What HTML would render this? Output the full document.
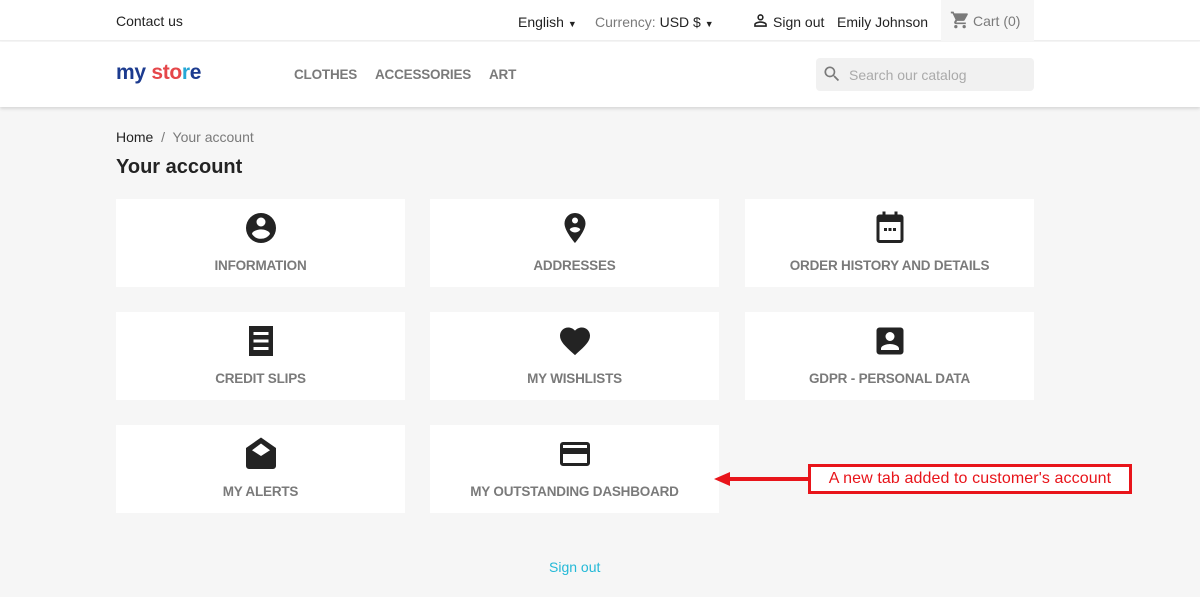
<!DOCTYPE html>
<html><head><style>
*{margin:0;padding:0;box-sizing:border-box}
body{width:1200px;height:597px;background:#f6f6f6;font-family:"Liberation Sans",sans-serif;color:#232323;position:relative;overflow:hidden}
.a{position:absolute}
.top{left:0;top:0;width:1200px;height:41px;background:#fff;border-bottom:1px solid #eee}
.hdr{left:0;top:42px;width:1200px;height:65px;background:#fff;box-shadow:0 2px 3px rgba(0,0,0,.12)}
.t{font-size:14px;white-space:nowrap}
.card{position:absolute;width:289px;height:88px;background:#fff;text-align:center}
.card svg{position:absolute;left:127px;top:11px}
.card span{position:absolute;left:0;right:0;top:59px;font-size:13.5px;font-weight:bold;color:#7a7a7a;letter-spacing:-0.2px}
.nav{font-size:13.5px;color:#7a7a7a;font-weight:bold;top:67px;letter-spacing:-0.2px}
</style></head><body>
<div class="a top"></div>
<div class="a t" style="left:116px;top:13px">Contact us</div>
<div class="a t" style="left:518px;top:14px">English <span style="font-size:9px">▼</span></div>
<div class="a t" style="left:595px;top:14px;color:#7a7a7a">Currency: <span style="color:#232323">USD $</span> <span style="font-size:9px;color:#232323">▼</span></div>
<svg class="a" style="left:751px;top:11px" width="19" height="19" viewBox="0 0 24 24"><path fill="#232323" d="M12 4a4 4 0 110 8 4 4 0 010-8zm0 2a2 2 0 100 4 2 2 0 000-4zm0 7c2.7 0 8 1.3 8 4v3H4v-3c0-2.7 5.3-4 8-4zm0 2c-3 0-6 1.5-6 2v1h12v-1c0-.5-3-2-6-2z"/></svg>
<div class="a t" style="left:773px;top:14px">Sign out</div>
<div class="a t" style="left:837px;top:14px">Emily Johnson</div>
<div class="a" style="left:941px;top:0;width:93px;height:41px;background:#f6f6f6"></div>
<svg class="a" style="left:950px;top:10px" width="20" height="20" viewBox="0 0 24 24"><path fill="#7a7a7a" d="M7 18a2 2 0 100 4 2 2 0 000-4zM1 2v2h2l3.6 7.6-1.4 2.4c-.7 1.3.3 3 1.8 3h12v-2H7.4l1.1-2h7.5c.8 0 1.4-.4 1.7-1l3.6-6.5A1 1 0 0020.5 4H5.2l-.9-2H1zm16 16a2 2 0 100 4 2 2 0 000-4z"/></svg>
<div class="a t" style="left:973px;top:13px;color:#7a7a7a">Cart (0)</div>
<div class="a hdr"></div>
<div class="a" style="left:116px;top:61px;font-size:21px;font-weight:bold;letter-spacing:-0.3px"><span style="color:#1c3b8f">my</span> <span style="color:#e5474a">sto</span><span style="color:#25a7d6">r</span><span style="color:#1c3b8f">e</span></div>
<div class="a nav" style="left:294px">CLOTHES</div>
<div class="a nav" style="left:375px">ACCESSORIES</div>
<div class="a nav" style="left:489px">ART</div>
<div class="a" style="left:816px;top:58px;width:218px;height:33px;background:#f1f1f1;border-radius:4px"></div>
<svg class="a" style="left:822px;top:64px" width="20" height="20" viewBox="0 0 24 24"><path fill="#7a7a7a" d="M15.5 14h-.8l-.3-.3A6.5 6.5 0 109.5 16a6.5 6.5 0 004.2-1.6l.3.3v.8l5 5 1.5-1.5-5-5zm-6 0a4.5 4.5 0 110-9 4.5 4.5 0 010 9z"/></svg>
<div class="a t" style="left:849px;top:67px;color:#aaa">Search our catalog</div>
<div class="a t" style="left:116px;top:129px">Home <span style="color:#7a7a7a">&nbsp;/&nbsp; Your account</span></div>
<div class="a" style="left:116px;top:156px;font-size:20px;font-weight:bold">Your account</div>

<div class="card" style="left:116px;top:199px"><svg width="36" height="36" viewBox="0 0 24 24"><path fill="#232323" d="M12 2a10 10 0 100 20 10 10 0 000-20zm0 3a3 3 0 110 6 3 3 0 010-6zm0 14.2a7.2 7.2 0 01-6-3.2c0-2 4-3.1 6-3.1s6 1.1 6 3.1a7.2 7.2 0 01-6 3.2z"/></svg><span>INFORMATION</span></div>
<div class="card" style="left:430px;top:199px"><svg width="36" height="36" viewBox="0 0 24 24"><path fill="#232323" d="M12 2a7 7 0 00-7 7c0 5 7 13 7 13s7-8 7-13a7 7 0 00-7-7zm0 3a2 2 0 110 4 2 2 0 010-4zm0 10a4.5 4.5 0 01-3.5-1.8c0-1.2 2.3-1.8 3.5-1.8s3.5.6 3.5 1.8A4.5 4.5 0 0112 15z"/></svg><span>ADDRESSES</span></div>
<div class="card" style="left:745px;top:199px"><svg width="36" height="36" viewBox="0 0 24 24"><path fill="#232323" d="M7 1h2v2h6V1h2v2h2a2 2 0 012 2v15a2 2 0 01-2 2H5a2 2 0 01-2-2V5a2 2 0 012-2h2V1zM5 8v12h14V8H5zm3 4h2v2H8zm3 0h2v2h-2zm3 0h2v2h-2z"/></svg><span>ORDER HISTORY AND DETAILS</span></div>

<div class="card" style="left:116px;top:312px"><svg width="36" height="36" viewBox="0 0 24 24"><path fill="#232323" d="M4 2h16v20H4zM7 6v2h10V6zm0 5v2h10v-2zm0 5v2h10v-2z"/></svg><span>CREDIT SLIPS</span></div>
<div class="card" style="left:430px;top:312px"><svg width="36" height="36" viewBox="0 0 24 24"><path fill="#232323" d="M12 21.4l-1.5-1.3C5.4 15.4 2 12.3 2 8.5 2 5.4 4.4 3 7.5 3c1.7 0 3.4.8 4.5 2.1C13.1 3.8 14.8 3 16.5 3 19.6 3 22 5.4 22 8.5c0 3.8-3.4 6.9-8.5 11.5z"/></svg><span>MY WISHLISTS</span></div>
<div class="card" style="left:745px;top:312px"><svg width="36" height="36" viewBox="0 0 24 24"><path fill="#232323" d="M5 3h14a2 2 0 012 2v14a2 2 0 01-2 2H5a2 2 0 01-2-2V5a2 2 0 012-2zm7 3a3 3 0 100 6 3 3 0 000-6zm-6 12h12v-1c0-2-4-3-6-3s-6 1-6 3z"/></svg><span>GDPR - PERSONAL DATA</span></div>

<div class="card" style="left:116px;top:425px"><svg width="36" height="36" viewBox="0 0 24 24"><path fill="#232323" d="M12 1L2 8v12a2 2 0 002 2h16a2 2 0 002-2V8zm0 4l6 4.5-6 3.8-6-3.8z"/></svg><span>MY ALERTS</span></div>
<div class="card" style="left:430px;top:425px"><svg width="36" height="36" viewBox="0 0 24 24"><path fill="#232323" d="M4 4h16a2 2 0 012 2v12a2 2 0 01-2 2H4a2 2 0 01-2-2V6a2 2 0 012-2zm0 4h16V6H4zm0 4v6h16v-6z"/></svg><span>MY OUTSTANDING DASHBOARD</span></div>

<svg class="a" style="left:712px;top:470px" width="100" height="18"><path d="M2 9l16-7v5h82v4H18v5z" fill="#e8141a"/></svg>
<div class="a" style="left:808px;top:464px;width:324px;height:30px;border:3px solid #e8141a;background:#fff;color:#e8141a;font-size:16px;text-align:center;line-height:24px;letter-spacing:0.1px">A new tab added to customer's account</div>
<div class="a t" style="left:549px;top:559px;color:#24b9d7">Sign out</div>
</body></html>
